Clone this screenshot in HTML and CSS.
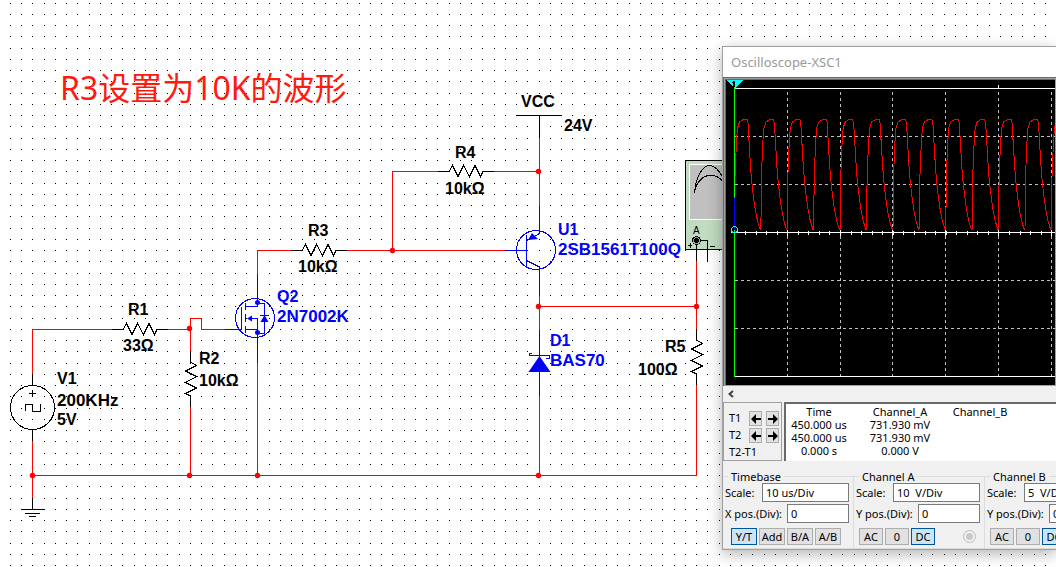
FILE: index.html
```html
<!DOCTYPE html>
<html lang="zh">
<head>
<meta charset="utf-8">
<title>Oscilloscope-XSC1</title>
<link rel="stylesheet" href="styles.css">
</head>
<body>
<main class="desk">
  <svg class="sheet" role="img" aria-label="Schematic">
    <defs>
      <pattern id="grid" width="45" height="45" patternUnits="userSpaceOnUse">
        <path class="dots" d="M10 3.500h1m10 0h1m10 0h1m11 0h1M10 14.500h1m10 0h1m10 0h1m11 0h1M10 25.500h1m10 0h1m10 0h1m11 0h1M10 36.500h1m10 0h1m10 0h1m11 0h1"/>
      </pattern>
      <path id="res" d="M0 0H11l3.500 -6 5.500 11 5.500 -11 6 11 5.500 -11 5.500 11 2.500 -5H56"/>
    </defs>
    <rect width="100%" height="100%" fill="url(#grid)"/>

    <g class="wire red">
      <path d="M32.500 374V329.500H112"/>
      <path d="M168 329.500H190.500M190.500 351V318.500H201.500V329.500H225"/>
      <path d="M190.500 407V475.500M32.500 430V498M32.500 475.500H696.500V385"/>
      <path d="M257.500 274V250.500H291M257.500 363V475.500"/>
      <path d="M347 250.500H506M392.500 250.500V171.500H438M494 171.500H539.500"/>
      <path d="M539.500 138V206M539.500 296V330M539.500 396V475.500"/>
      <path d="M539.500 306.500H696.500M696.500 261V330"/>
    </g>

    <g class="wire black">
      <use href="#res" transform="translate(112 329.500)"/>
      <use href="#res" transform="translate(291 250.500)"/>
      <use href="#res" transform="translate(438 171.500)"/>
      <use href="#res" transform="translate(190.500 351) rotate(90)"/>
      <use href="#res" transform="translate(696.500 329) rotate(90)"/>
      <path d="M32.500 374V386M32.500 430V441M29 393.500H36M32.500 390V397M25.500 411V404.500H32.500V411.500H40.500V404"/>
      <circle cx="32.500" cy="407.500" r="22"/>
      <path d="M32.500 498V509.500M21 509.500H45M25 513.500H40M29 516.500H36"/>
      <path d="M516 115.500H562M539.500 115V138"/>
    </g>

    <g class="wire blue">
      <path d="M225 329.500H241.500M241.500 307V330M245.500 303V310M245.500 314V322M245.500 326V333"/>
      <path d="M245.500 306.500H257.500V274M257.500 303.500H264.500V333.500H257.500M245.500 329.500H257.500M248 318.500H257.500V363M260 315.500H269"/>
      <circle cx="255" cy="318" r="19.500"/>
      <path d="M505 250.500H526.500M526.500 235V267M526.500 241L539.500 233.500V206M526.500 260.500L539.500 267V296"/>
      <circle cx="536" cy="250" r="19.500"/>
      <path d="M539.500 330V396M531.500 353.500H529.500V355.500H549.500V358.500H546"/>
    </g>
    <g class="solid-blue">
      <path d="M247 318.500l5 -3v6zM264.500 315l4 7h-8zM528 240l4 -7 6 6zM539.500 356l11 16h-22z"/>
      <circle cx="257.500" cy="302.500" r="2.500"/><circle cx="257.500" cy="332.500" r="2.500"/>
    </g>
    <g class="solid-red">
      <circle cx="32.500" cy="475.500" r="2.700"/><circle cx="189.500" cy="475.500" r="2.700"/>
      <circle cx="257.500" cy="475.500" r="2.700"/><circle cx="538.500" cy="475.500" r="2.700"/>
      <circle cx="189.500" cy="328.500" r="2.700"/><circle cx="392.500" cy="250.500" r="2.700"/>
      <circle cx="538.500" cy="171.500" r="2.700"/><circle cx="538.500" cy="306.500" r="2.700"/>
      <circle cx="696.500" cy="306.500" r="2.700"/>
    </g>

    <g class="wire black">
      <rect x="685.500" y="160.500" width="80" height="89" fill="#c0dcc0"/>
      <rect x="689.500" y="164.500" width="70" height="55" fill="#c0c0c0" stroke="#fff"/>
      <path d="M694.500 193C696 174 704 165.500 709.500 165.500S719 170 723 178M694.500 193C696 181 704 175.500 709.500 175.500S719 176 723 182"/>
      <path d="M696.500 240V261M696.500 240.500H707.500V262M688 245.500H692M690.500 243V248M710 246.500H715"/>
      <circle cx="696.500" cy="240.500" r="4" fill="#a0a0a0"/><circle cx="696.500" cy="240.500" r="2" fill="#000"/>
    </g>
    <text class="pin" x="693" y="234">A</text>

    <g class="label">
      <text x="128" y="315">R1</text><text x="123" y="351">33Ω</text>
      <text x="199" y="364">R2</text><text x="199" y="386">10kΩ</text>
      <text x="308" y="236">R3</text><text x="298" y="272">10kΩ</text>
      <text x="455" y="158">R4</text><text x="445" y="194">10kΩ</text>
      <text x="665" y="352">R5</text><text x="638" y="375">100Ω</text>
      <text x="521" y="107">VCC</text><text x="564" y="131">24V</text>
      <text x="57" y="384">V1</text><text x="57" y="425">5V</text>
      <text class="part" x="57" y="406">200KHz</text>
    </g>
    <g class="label label-blue">
      <text x="277" y="302">Q2</text><text class="part" x="277" y="322">2N7002K</text>
      <text x="558" y="235">U1</text><text class="part" x="558" y="255">2SB1561T100Q</text>
      <text x="550" y="346">D1</text><text class="part" x="550" y="366">BAS70</text>
    </g>
    <text class="note" x="60" y="100">R3设置为10K的波形</text>
  </svg>

  <section class="scope">
    <header class="title">Oscilloscope-XSC1</header>
    <div class="bezel">
      <svg class="screen" role="img" aria-label="Channel A trace">
        <defs>
          <path id="pulse" d="M0 149L.500 97 2 61 3 48 5 42 8 40 12.500 39.500 13.500 43 14.500 61 16 86 17 99 18.500 113 20.500 128 23 141 25.500 149H26.400"/>
        </defs>
        <g class="dash">
          <path d="M61.500 12V296M114.500 12V296M166.500 12V296M219.500 12V296M272.500 12V296M325.500 12V296"/>
          <path d="M9 56.500H1200M9 104.500H1200M9 200.500H1200M9 248.500H1200"/>
        </g>
        <path class="axis" d="M9 8.500H1200M5 152.500H1200M9 296.500H1200M272.500 5V8M61.500 150V156M114.500 150V156M166.500 150V156M219.500 150V156M272.500 150V156M325.500 150V156"/>
        <path class="ticks" d="M19 152.500H1200"/>
        <g class="trace">
          <use href="#pulse" x="8.500"/><use href="#pulse" x="34.900"/><use href="#pulse" x="61.300"/>
          <use href="#pulse" x="87.700"/><use href="#pulse" x="114.200"/><use href="#pulse" x="140.600"/>
          <use href="#pulse" x="167"/><use href="#pulse" x="193.400"/><use href="#pulse" x="219.800"/>
          <use href="#pulse" x="246.200"/><use href="#pulse" x="272.600"/><use href="#pulse" x="299"/>
          <use href="#pulse" x="325.500"/>
        </g>
        <path class="live" d="M8.500 8V297"/>
        <path class="cursor" d="M8.500 118V150"/>
        <path fill="#0ff" d="M0 0H17L8.500 8.500z"/>
        <path d="M6 2h1v-1h2v6h-2v-4h-1z"/>
        <circle class="origin" cx="8.500" cy="149.500" r="3"/>
      </svg>
    </div>
    <div class="scroll">
      <svg width="6" height="8" viewBox="0 0 6 8"><path d="M5 1L1.500 4 5 7" fill="none" stroke="#404040" stroke-width="2"/></svg>
    </div>
    <div class="measure">
      <div class="cursors">
        <div class="cur"><span>T1</span><button aria-label="T1 left"><svg class="arrow" viewBox="0 0 10 10"><path d="M0 5L5 0V4H10V6H5V10z"/></svg></button><button aria-label="T1 right"><svg class="arrow" viewBox="0 0 10 10"><path d="M10 5L5 0V4H0V6H5V10z"/></svg></button></div>
        <div class="cur"><span>T2</span><button aria-label="T2 left"><svg class="arrow" viewBox="0 0 10 10"><path d="M0 5L5 0V4H10V6H5V10z"/></svg></button><button aria-label="T2 right"><svg class="arrow" viewBox="0 0 10 10"><path d="M10 5L5 0V4H0V6H5V10z"/></svg></button></div>
        <div class="delta">T2-T1</div>
      </div>
      <div class="readout">
        <table>
          <tr><th class="c-time">Time</th><th class="c-a">Channel_A</th><th class="c-b">Channel_B</th></tr>
          <tr><td>450.000 us</td><td>731.930 mV</td><td></td></tr>
          <tr><td>450.000 us</td><td>731.930 mV</td><td></td></tr>
          <tr><td>0.000 s</td><td>0.000 V</td><td></td></tr>
        </table>
      </div>
    </div>
    <div class="groups">
      <fieldset class="group">
        <legend>Timebase</legend>
        <div class="row"><label for="ts">Scale:</label><input id="ts" class="wide" value="10 us/Div"></div>
        <div class="row"><label for="tx">X pos.(Div):</label><input id="tx" class="short" value="0"></div>
        <div class="keys time-keys"><button class="on">Y/T</button><button>Add</button><button>B/A</button><button>A/B</button></div>
      </fieldset>
      <fieldset class="group">
        <legend>Channel A</legend>
        <div class="row"><label for="as">Scale:</label><input id="as" class="wide" value="10  V/Div"></div>
        <div class="row"><label for="ay">Y pos.(Div):</label><input id="ay" class="short" value="0"></div>
        <div class="keys"><button>AC</button><button>0</button><button class="on">DC</button><input type="radio" class="probe" aria-label="Channel A probe" checked disabled></div>
      </fieldset>
      <fieldset class="group">
        <legend>Channel B</legend>
        <div class="row"><label for="bs">Scale:</label><input id="bs" class="wide" value="5  V/Div"></div>
        <div class="row"><label for="by">Y pos.(Div):</label><input id="by" class="short" value="0"></div>
        <div class="keys"><button>AC</button><button>0</button><button class="on">DC</button></div>
      </fieldset>
    </div>
  </section>
</main>
</body>
</html>
```
FILE: styles.css
```css
* { box-sizing: border-box; }
body { margin: 0; background: #fff; }
.desk { position: relative; height: 100vh; overflow: hidden; }
.sheet { display: block; width: 100%; height: 100%; }

.dots { stroke: #000; stroke-width: 1; shape-rendering: crispEdges; }
.wire { fill: none; stroke-width: 1; shape-rendering: crispEdges; }
.red { stroke: #f00; }
.black { stroke: #000; }
.blue { stroke: #00f; }
.solid-blue { fill: #00f; }
.solid-red { fill: #f00; }
.label { font: bold 16px "Liberation Sans", Arial, sans-serif; fill: #000; }
.label-blue { fill: #00f; }
.part { font-size: 17px; }
.pin { font: 10px "Liberation Sans", Arial, sans-serif; }
.note { font: 32px "Noto Sans", "Noto Sans CJK SC", sans-serif; fill: #ff1a10; }

.scope {
  position: absolute; left: 722px; top: 46px; right: 0;
  overflow: hidden;
  border: 1px solid #a0a0a0; border-right: 0;
  background: #f0f0f0; color: #000;
  box-shadow: 0 4px 14px rgba(0, 0, 0, .3);
  font: 11px/13px "Noto Sans", "Open Sans", sans-serif;
}
.title { padding: 0 8px; background: #fff; color: #999; font-size: 13px; line-height: 30px; }
.bezel { padding: 1px; border: 1px solid #696969; border-right: 0; border-bottom: 0; background: #a0a0a0; }
.screen { display: block; width: 100%; height: 306px; border-left: 1px solid #696969; border-top: 1px solid #696969; background: #000; }
.screen path, .origin { shape-rendering: crispEdges; }
.dash { stroke: #c0c0c0; stroke-dasharray: 3 3; }
.axis { stroke: #fff; }
.ticks { stroke: #fff; stroke-width: 4; stroke-dasharray: 1 9.56; }
.live { stroke: #0f0; }
.cursor { stroke: #00f; }
.trace { stroke: #f00; fill: none; }
.origin { fill: none; stroke: #0ff; }

.scroll { display: flex; align-items: center; height: 16px; padding: 0 5px; }
.measure { display: flex; gap: 2px; height: 59px; }
.cursors { flex: none; width: 59px; padding: 8px 2px 0 5px; border: 1px solid #a0a0a0; }
.cur { display: flex; gap: 4px; height: 17px; }
.cur span { width: 16px; }
button {
  padding: 0; border: 1px solid #adadad; background: #e1e1e1; color: #000;
  font: inherit; text-align: center; white-space: nowrap;
}
.cur button { flex: none; display: flex; align-items: center; justify-content: center; width: 13px; height: 15px; }
.arrow { flex: none; width: 10px; height: 10px; }
.readout { flex: 1; overflow: hidden; padding: 1px 0 0 1px; border-top: 2px solid #696969; border-left: 2px solid #696969; background: #fff; }
table { border-collapse: collapse; table-layout: fixed; width: 224px; }
th, td { padding: 0; font-weight: normal; text-align: center; white-space: nowrap; }
.c-time { width: 64px; }
.c-a { width: 98px; }
.c-b { width: 62px; }

.groups { display: flex; padding-top: 9px; }
.group { flex: none; width: 131px; min-width: 0; margin: 0; padding: 0 4px 3px 2px; border: 1px solid #dcdcdc; border-left: 0; }
legend { margin-left: 3px; padding: 0 3px; }
.row { display: flex; justify-content: space-between; align-items: center; margin-bottom: 2px; white-space: nowrap; }
input { height: 19px; margin: 0; padding: 0 3px; border: 1px solid #7a7a7a; background: #fff; color: #000; font: inherit; white-space: pre; }
.wide { width: 87px; }
.short { width: 62px; }
.keys { display: flex; align-items: center; gap: 2px; padding: 3px 0 0 3px; }
.time-keys { padding-left: 6px; }
.keys button { width: 24px; height: 17px; line-height: 15px; }
.time-keys button { width: 26px; }
.keys .on { border-color: #005499; background: #cce4f7; }
.probe { appearance: none; width: 13px; height: 13px; margin: 0 4px 0 auto; padding: 2px; border: 1px solid #bcbcbc; border-radius: 50%; background: #c8c8c8 content-box; }
```
